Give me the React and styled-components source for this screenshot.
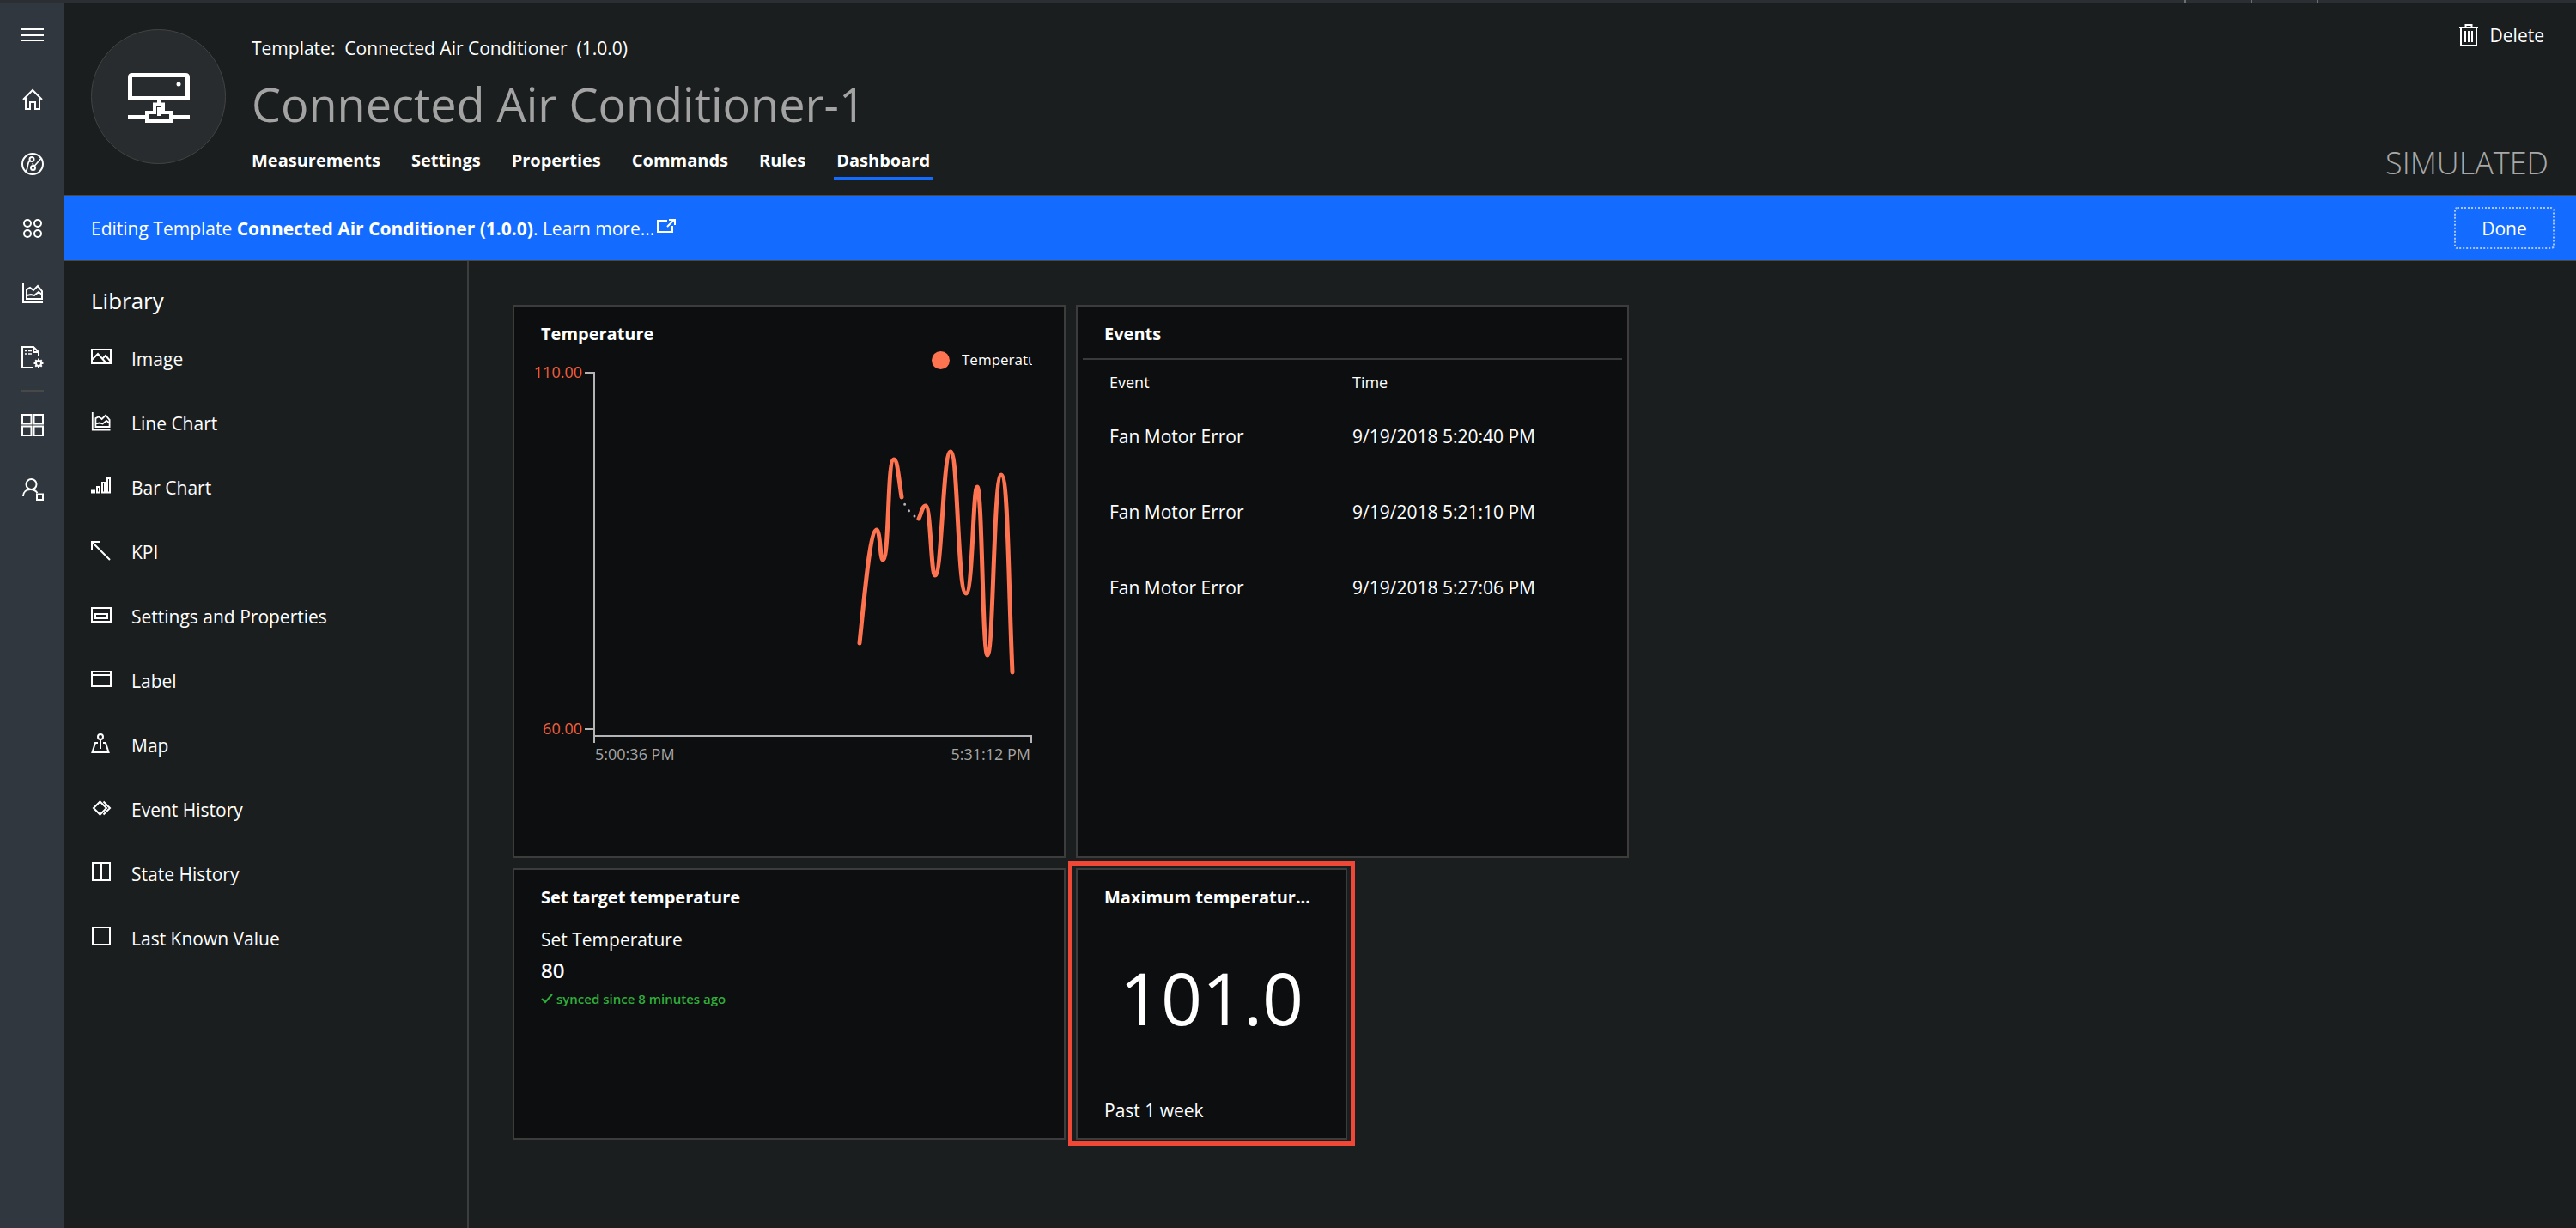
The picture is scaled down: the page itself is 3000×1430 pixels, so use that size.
import React from "react";
import styled, { createGlobalStyle } from "styled-components";

const GlobalStyle = createGlobalStyle`
  *, *::before, *::after { box-sizing: border-box; }
  body {
    margin: 0;
    background: #1a1e1e;
    color: #fff;
    font-family: "Open Sans", "Noto Sans", sans-serif;
    font-size: 21px;
    line-height: 28px;
  }
  h1, h2, p, ul { margin: 0; padding: 0; }
  ul { list-style: none; }
  a { color: inherit; text-decoration: none; }
  button { font: inherit; color: inherit; background: none; border: 0; padding: 0; cursor: pointer; }
`;

const Page = styled.div`
  min-height: 100vh;
  display: flex;
  flex-direction: column;
`;

const TopEdge = styled.div`
  height: 3px;
  flex: none;
  display: flex;
  justify-content: flex-end;
  gap: 75px;
  padding-right: 300px;
  background: #2b2e32;
`;

const EdgeTick = styled.span`
  width: 2px;
  background: #6c6f72;
`;

const Shell = styled.div`
  flex: 1;
  display: flex;
`;

const Rail = styled.nav`
  width: 75px;
  flex: none;
  background: #30373f;
`;

const RailLink = styled.a`
  display: flex;
  align-items: center;
  justify-content: center;
  height: 75px;
`;

const RailRule = styled.div`
  height: 2px;
  width: 26px;
  margin: 1px auto;
  background: #484848;
`;

const Main = styled.main`
  flex: 1;
  min-width: 0;
  display: flex;
  flex-direction: column;
`;

const Header = styled.header`
  display: flex;
  padding: 0 32px 0 31px;
  border-bottom: 1px solid #4d4742;
`;

const Avatar = styled.div`
  width: 157px;
  height: 157px;
  flex: none;
  margin: 31px 27px 0 0;
  display: flex;
  align-items: center;
  justify-content: center;
  border: 1px solid #434343;
  border-radius: 50%;
  background: #292c2e;
`;

const Heading = styled.div`
  flex: 1;
  padding: 39px 0 17px;
`;

const Crumb = styled.p`
  padding: 0 3px;
  white-space: pre;
`;

const Title = styled.h1`
  margin: 15px 0 16px;
  padding: 0 3px;
  font-size: 54px;
  line-height: 72px;
  font-weight: 400;
  color: #a3a3a3;
`;

const Tabs = styled.nav`
  display: flex;
  gap: 30px;
`;

const Tab = styled.a`
  padding: 0 3px 5px;
  font-size: 20px;
  font-weight: 700;
  border-bottom: 4px solid ${(p) => (p.$active ? "#136bff" : "transparent")};
`;

const HeaderSide = styled.div`
  display: flex;
  flex-direction: column;
  justify-content: space-between;
  align-items: flex-end;
  padding: 24px 0 13px;
`;

const DeleteButton = styled.button`
  display: flex;
  align-items: center;
  gap: 14px;
  padding-right: 5px;
`;

const Status = styled.p`
  font-size: 36px;
  line-height: 48px;
  font-weight: 300;
  color: #a8a8a8;
`;

const Banner = styled.section`
  height: 76px;
  display: flex;
  align-items: center;
  justify-content: space-between;
  padding: 0 25px 0 31px;
  background: #136bff;
  border-bottom: 1px solid #4d4742;
`;

const BannerLink = styled.a`
  svg { margin-left: 3px; vertical-align: 2px; }
`;

const DoneButton = styled.button`
  width: 117px;
  height: 49px;
  border: 2px dotted #a9c4ee;
  border-radius: 4px;
`;

const Workspace = styled.div`
  flex: 1;
  display: flex;
`;

const Library = styled.aside`
  width: 471px;
  flex: none;
  padding: 27px 31px 0;
  border-right: 2px solid #3c3e3e;
`;

const LibraryTitle = styled.h2`
  margin-bottom: 35px;
  font-size: 26px;
  line-height: 38px;
  font-weight: 400;
`;

const LibraryItem = styled.button`
  width: 100%;
  height: 75px;
  display: flex;
  align-items: flex-start;
  gap: 23px;
  text-align: left;
`;

const Canvas = styled.div`
  flex: 1;
  padding: 51px;
`;

const Board = styled.div`
  display: grid;
  grid-template-columns: repeat(4, 316px);
  grid-auto-rows: 316px;
  gap: 12px;
`;

const Tile = styled.section`
  position: relative;
  grid-column: span ${(p) => p.$cols};
  grid-row: span ${(p) => p.$rows};
  display: flex;
  flex-direction: column;
  min-width: 0;
  border: 2px solid #3c3c3c;
  background: #0d0e0f;
`;

const Highlight = styled.div`
  position: absolute;
  inset: -10px -11px -9px;
  border: 5px solid #f04737;
  pointer-events: none;
`;

const TileTitle = styled.h2`
  padding: 18px 31px 0;
  font-size: 20px;
  line-height: 28px;
  font-weight: 700;
  white-space: nowrap;
`;

const Legend = styled.div`
  display: flex;
  align-items: center;
  justify-content: flex-end;
  gap: 14px;
  margin-top: 3px;
  padding-right: 37px;
  font-size: 17px;
  line-height: 26px;
`;

const LegendDot = styled.span`
  width: 21px;
  height: 21px;
  border-radius: 50%;
  background: #ff7450;
`;

const LegendText = styled.span`
  width: 82px;
  overflow: hidden;
  white-space: nowrap;
`;

const ChartSvg = styled.svg`
  display: block;
  width: 100%;
  overflow: visible;

  text { font-size: 18px; }
`;

const EventTable = styled.table`
  margin: 14px 6px 0;
  border-top: 2px solid #3a3a3a;
  border-collapse: separate;
  border-spacing: 0;
  table-layout: fixed;

  th {
    height: 45px;
    padding: 0 0 5px 31px;
    text-align: left;
    vertical-align: bottom;
    font-size: 18px;
    font-weight: 400;
  }
  td {
    height: 88px;
    padding: 0 0 0 31px;
  }
  th:first-child { width: 283px; }
`;

const Reading = styled.div`
  padding: 21px 31px 0;
`;

const ReadingValue = styled.p`
  margin-top: 8px;
  font-size: 24px;
  font-weight: 600;
`;

const Synced = styled.p`
  display: flex;
  align-items: center;
  gap: 4px;
  margin-top: 7px;
  font-size: 15px;
  line-height: 24px;
  font-weight: 600;
  color: #2fae3b;
`;

const KpiValue = styled.p`
  margin-top: 47px;
  text-align: center;
  font-size: 84px;
  line-height: 112px;
`;

const KpiRange = styled.p`
  margin-top: auto;
  padding: 0 31px 18px;
`;

function Icon({ w = 26, h = 26, sw = 2, children }) {
  return (
    <svg width={w} height={h} viewBox={`0 0 ${w} ${h}`} fill="none" stroke="currentColor" strokeWidth={sw} aria-hidden="true">
      {children}
    </svg>
  );
}

const areaChart = (
  <>
    <path d="M2 1v23h23" />
    <path d="M6 20V9l4-2 4 3 5-5 5 6v9z" />
    <path d="M6 16l5-1 4 1 5-4 4 3" />
  </>
);

const railTop = [
  ["Menu", <path d="M0 6h26M0 13h26M0 19h26" />],
  ["Home", <path d="M2 13L13 2l11 11M5 11v13h5v-8h6v8h5V11" />],
  ["Explorer", (
    <>
      <circle cx="13" cy="13" r="12" />
      <circle cx="12" cy="7.500" r="2.500" />
      <circle cx="13.500" cy="17.500" r="2.500" />
      <path d="M10 9C6.500 11 8.500 15 5.500 21.500M15 15.500L22.500 7M14 15l-1-3" strokeWidth="1.600" />
    </>
  )],
  ["Device sets", (
    <>
      <circle cx="7" cy="7" r="4" />
      <circle cx="19" cy="7" r="4" />
      <circle cx="7" cy="19" r="4" />
      <circle cx="19" cy="19" r="4" />
    </>
  )],
  ["Analytics", areaChart],
  ["Jobs", (
    <>
      <path d="M14 25H1V1h13l6 6v5M14 1v6h6" />
      <path d="M4 5.500h2M8 5.500h4M4 9h2M8 9h4" strokeWidth="1.500" />
      <circle cx="20" cy="20" r="3" />
      <path d="M20 14.500v2.500M20 23v2.500M14.500 20h2.500M23 20h2.500M16.200 16.200l1.600 1.600M22.200 22.200l1.600 1.600M16.200 23.800l1.600-1.600M22.200 17.800l1.600-1.600" />
    </>
  )],
];

const railBottom = [
  ["Application builder", <path d="M1 1h10.500v10.500H1zM14.500 1H25v10.500H14.500zM1 14.500h10.500V25H1zM14.500 14.500H25V25H14.500z" />],
  ["Administration", (
    <>
      <circle cx="11.500" cy="7" r="6" />
      <path d="M2 21c0-5 3.500-8 8.500-8 4 0 6 1 8 4M18 18.500h7v6.500h-7z" />
    </>
  )],
];

const library = [
  ["Image", <path d="M1 3h22v16H1zM1 15l7-7 10 11M14 13l3-3 6 7M17 7h1" />],
  ["Line Chart", <g transform="scale(0.9)">{areaChart}</g>],
  ["Bar Chart", <path d="M1 17.500v2h3v-2zM7 13h3v6.500H7zM13 8h3v11.500h-3zM19 3h3v16.500h-3z" />],
  ["KPI", <path d="M1 12V2h10M1 2l21 21" />],
  ["Settings and Properties", <path d="M1 4h22v16H1zM5 11h14v5H5z" />],
  ["Label", <path d="M1 3h22v17H1zM1 7h22" />],
  ["Map", (
    <>
      <circle cx="11" cy="4" r="3" />
      <path d="M11 7v11M8 11H5L1.500 22h19L17 11h-3" />
    </>
  )],
  ["Event History", <path d="M10.500 4.500L18 12l-7.500 7.500L3 12zM14.500 4.500L22 12l-7.500 7.500" />],
  ["State History", <path d="M2 1h20v20H2zM12 1v20" />],
  ["Last Known Value", <path d="M2 1h20v20H2z" />],
];

const tabs = ["Measurements", "Settings", "Properties", "Commands", "Rules", "Dashboard"];

const events = ["9/19/2018 5:20:40 PM", "9/19/2018 5:21:10 PM", "9/19/2018 5:27:06 PM"];

function RailLinks({ items }) {
  return items.map(([name, art]) => (
    <RailLink key={name} href="#" aria-label={name}>
      <Icon>{art}</Icon>
    </RailLink>
  ));
}

function TemperatureChart() {
  return (
    <ChartSvg viewBox="0 0 640 460" role="img" aria-label="Temperature over time">
      <g fill="none" stroke="#b4b4b4" strokeWidth="2">
        <path d="M82 2h11V433M82 417h11" />
        <path d="M93 425H602V433" />
      </g>
      <g fill="#f0603f" textAnchor="end">
        <text x="79" y="8">110.00</text>
        <text x="79" y="423">60.00</text>
      </g>
      <g fill="#a5a5a5">
        <text x="94" y="453">5:00:36 PM</text>
        <text x="601" y="453" textAnchor="end">5:31:12 PM</text>
      </g>
      <path d="M451 147Q458 166 471 172" fill="none" stroke="#b4b4b4" strokeWidth="3" strokeLinecap="round" strokeDasharray="0 9" />
      <g fill="none" stroke="#ff7450" strokeWidth="5" strokeLinecap="round">
        <path d="M402 317C408 260 414 185 422 185C426 185 426 220 429 220C437 220 434 103 442 103C446 103 447 120 451 147" />
        <path d="M471 172C474 166 475 157 479 157C485 157 485 238 490 238C498 238 499 94 508 94C517 94 516 259 526 259C534 259 534 135 539 135C545 135 545 331 551 331C558 331 558 121 567 121C575 121 575 235 580 351" />
      </g>
    </ChartSvg>
  );
}

export default function App() {
  return (
    <Page>
      <GlobalStyle />
      <TopEdge>
        <EdgeTick />
        <EdgeTick />
        <EdgeTick />
      </TopEdge>
      <Shell>
        <Rail>
          <RailLinks items={railTop} />
          <RailRule />
          <RailLinks items={railBottom} />
        </Rail>
        <Main>
          <Header>
            <Avatar>
              <Icon w={72} h={60} sw={5}>
                <path d="M2.500 31.500V7q0-2.500 2.500-2.500h62q2.500 0 2.500 2.500V31.500z" />
                <circle cx="59" cy="15" r="2.500" fill="currentColor" stroke="none" />
                <path d="M36 32v6M22 58V48h9V38.500h10V48h9v10zM36 42v10M0 53h21M51 53h21" strokeWidth="4" />
              </Icon>
            </Avatar>
            <Heading>
              <Crumb>{"Template:  Connected Air Conditioner  (1.0.0)"}</Crumb>
              <Title>Connected Air Conditioner-1</Title>
              <Tabs>
                {tabs.map((t) => (
                  <Tab key={t} href="#" $active={t === "Dashboard"}>{t}</Tab>
                ))}
              </Tabs>
            </Heading>
            <HeaderSide>
              <DeleteButton>
                <Icon w={22} h={26}>
                  <path d="M0 4h22M7.500 4V1h7v3M2 4v21h18V4" />
                  <path d="M7 8v13M11 8v13M15 8v13" />
                </Icon>
                Delete
              </DeleteButton>
              <Status>SIMULATED</Status>
            </HeaderSide>
          </Header>
          <Banner>
            <p>
              Editing Template <b>Connected Air Conditioner (1.0.0)</b>.{" "}
              <BannerLink href="#">
                Learn more...
                <Icon w={22} h={18}>
                  <path d="M12 3H1v13h17V9M12 10l8-8M14 2h7v6" />
                </Icon>
              </BannerLink>
            </p>
            <DoneButton>Done</DoneButton>
          </Banner>
          <Workspace>
            <Library>
              <LibraryTitle>Library</LibraryTitle>
              <ul>
                {library.map(([name, art]) => (
                  <li key={name}>
                    <LibraryItem>
                      <Icon w={24} h={24}>{art}</Icon>
                      {name}
                    </LibraryItem>
                  </li>
                ))}
              </ul>
            </Library>
            <Canvas>
              <Board>
                <Tile $cols={2} $rows={2}>
                  <TileTitle>Temperature</TileTitle>
                  <Legend>
                    <LegendDot />
                    <LegendText>Temperature</LegendText>
                  </Legend>
                  <TemperatureChart />
                </Tile>
                <Tile $cols={2} $rows={2}>
                  <TileTitle>Events</TileTitle>
                  <EventTable>
                    <thead>
                      <tr>
                        <th scope="col">Event</th>
                        <th scope="col">Time</th>
                      </tr>
                    </thead>
                    <tbody>
                      {events.map((time) => (
                        <tr key={time}>
                          <td>Fan Motor Error</td>
                          <td>{time}</td>
                        </tr>
                      ))}
                    </tbody>
                  </EventTable>
                </Tile>
                <Tile $cols={2} $rows={1}>
                  <TileTitle>Set target temperature</TileTitle>
                  <Reading>
                    <p>Set Temperature</p>
                    <ReadingValue>80</ReadingValue>
                    <Synced>
                      <Icon w={14} h={12} sw={2}>
                        <path d="M1 6l4 4 8-9" />
                      </Icon>
                      synced since 8 minutes ago
                    </Synced>
                  </Reading>
                </Tile>
                <Tile $cols={1} $rows={1}>
                  <TileTitle>Maximum temperatur...</TileTitle>
                  <KpiValue>101.0</KpiValue>
                  <KpiRange>Past 1 week</KpiRange>
                  <Highlight />
                </Tile>
              </Board>
            </Canvas>
          </Workspace>
        </Main>
      </Shell>
    </Page>
  );
}
